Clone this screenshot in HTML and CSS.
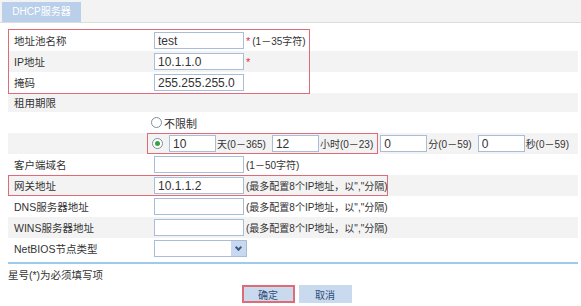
FILE: index.html
```html
<!DOCTYPE html>
<html lang="zh-CN">
<head>
  <meta charset="UTF-8">
  <title>DHCP服务器</title>
  <link rel="stylesheet" href="styles.css">
</head>
<body>
  <div class="tabbar">
    <span class="tab">DHCP服务器</span>
  </div>

  <div class="form">
    <!-- 基本信息 -->
    <div class="group">
      <div class="row">
        <div class="label">地址池名称</div>
        <div class="field"><input class="text" value="test"><span class="req">*</span><span class="hint">(1－35字符)</span></div>
      </div>
      <div class="row alt">
        <div class="label">IP地址</div>
        <div class="field"><input class="text" value="10.1.1.0"><span class="req">*</span></div>
      </div>
      <div class="row">
        <div class="label">掩码</div>
        <div class="field"><input class="text" value="255.255.255.0"></div>
      </div>
    </div>

    <!-- 租用期限 -->
    <div class="row alt short">
      <div class="label">租用期限</div>
    </div>
    <div class="row">
      <div class="label"></div>
      <div class="field lease"><span class="radio"></span>不限制</div>
    </div>
    <div class="row alt">
      <div class="label"></div>
      <div class="field lease">
        <span class="lease-mark">
          <span class="radio on"></span>
          <input class="num" value="10"><span class="unit">天(0－365)</span>
          <input class="num" value="12"><span class="unit">小时(0－23)</span>
        </span>
        <input class="num" value="0"><span class="unit">分(0－59)</span>
        <input class="num" value="0"><span class="unit">秒(0－59)</span>
      </div>
    </div>

    <div class="row">
      <div class="label">客户端域名</div>
      <div class="field"><input class="text"><span class="hint">(1－50字符)</span></div>
    </div>
    <div class="row alt gateway">
      <div class="label">网关地址</div>
      <div class="field"><input class="text" value="10.1.1.2"><span class="hint">(最多配置8个IP地址，以","分隔)</span></div>
    </div>
    <div class="row">
      <div class="label">DNS服务器地址</div>
      <div class="field"><input class="text"><span class="hint">(最多配置8个IP地址，以","分隔)</span></div>
    </div>
    <div class="row alt">
      <div class="label">WINS服务器地址</div>
      <div class="field"><input class="text"><span class="hint">(最多配置8个IP地址，以","分隔)</span></div>
    </div>
    <div class="row">
      <div class="label">NetBIOS节点类型</div>
      <div class="field">
        <span class="select"><span class="arrow"></span></span>
      </div>
    </div>
  </div>

  <div class="note">星号(*)为必须填写项</div>

  <div class="buttons">
    <button class="btn ok">确定</button>
    <button class="btn">取消</button>
  </div>
</body>
</html>
```

FILE: styles.css
```css
* {
  margin: 0;
  padding: 0;
  box-sizing: border-box;
}
body {
  background-color: #ffffff;
  font-family: "Liberation Sans", "Noto Sans CJK SC", sans-serif;
  font-size: 11px;
  color: #333333;
}
.tabbar {
  height: 23px;
  padding: 2px 0 0 2px;
  background-color: #f3f3f3;
  border-bottom: 1px solid #dcdcdc;
}
.tab {
  display: inline-block;
  width: 79px;
  height: 20px;
  line-height: 20px;
  background-color: #b9cfea;
  color: #ffffff;
  font-size: 10px;
  text-align: center;
}
.form {
  margin: 7px 3px 0 8px;
  border-bottom: 2px solid #9ccbee;
  padding-bottom: 3px;
}
.group {
  position: relative;
}
.group::after {
  content: "";
  position: absolute;
  left: 0;
  top: -1px;
  bottom: -1px;
  width: 300px;
  border: 1px solid #e06b76;
}
.row {
  display: grid;
  grid-template-columns: 139px 1fr;
  align-items: center;
  height: 21px;
}
.row.alt {
  background-color: #f3f3f3;
}
.row.short {
  height: 19px;
}
.gateway {
  position: relative;
}
.gateway::after {
  content: "";
  position: absolute;
  left: 0;
  top: 0;
  bottom: 0;
  width: 378px;
  border: 1px solid #e06b76;
}
.label {
  padding-left: 6px;
  font-size: 10.5px;
  white-space: nowrap;
}
.field {
  display: flex;
  align-items: center;
  padding-left: 7px;
  white-space: nowrap;
  height: 100%;
}
.field.lease {
  padding-left: 0;
}
input {
  font-family: "Liberation Sans", "Noto Sans CJK SC", sans-serif;
  font-size: 12px;
  color: #333333;
  border: 1px solid #a9bed6;
  background-color: #ffffff;
  height: 17px;
  padding: 0 3px;
  outline: none;
}
.text {
  width: 90px;
}
.num {
  width: 47px;
  margin-left: 2px;
}
.req {
  color: #e0303a;
  margin-left: 2px;
}
.hint {
  margin-left: 2px;
  font-size: 10px;
}
.unit {
  font-size: 10px;
  margin-left: 1px;
  padding-right: 4px;
}
.lease-mark {
  display: inline-flex;
  align-items: center;
  height: 100%;
  padding: 0 0 0 4px;
  border: 1px solid #e06b76;
}
.radio {
  display: inline-block;
  width: 11px;
  height: 11px;
  border: 1px solid #7f8fa0;
  border-radius: 50%;
  background-color: #ffffff;
  margin: 0 2px 0 4px;
  position: relative;
}
.lease-mark .radio {
  margin: 0 4px 0 0;
}
.radio.on::after {
  content: "";
  position: absolute;
  left: 2px;
  top: 2px;
  width: 5px;
  height: 5px;
  border-radius: 50%;
  background-color: #3aa14a;
}
.select {
  display: inline-flex;
  justify-content: flex-end;
  width: 93px;
  height: 17px;
  border: 1px solid #a9bed6;
  background-color: #ffffff;
}
.arrow {
  width: 15px;
  height: 15px;
  background-color: #c8d9ef;
  position: relative;
}
.arrow::after {
  content: "";
  position: absolute;
  left: 5px;
  top: 4px;
  width: 3px;
  height: 3px;
  border-right: 2px solid #3a5a8a;
  border-bottom: 2px solid #3a5a8a;
  transform: rotate(45deg);
}
.note {
  margin: 3px 0 0 8px;
  font-size: 10.5px;
}
.buttons {
  display: flex;
  justify-content: center;
  gap: 4px;
  margin: 3px 0 0 12px;
}
.btn {
  width: 53px;
  height: 18px;
  font-family: "Liberation Sans", "Noto Sans CJK SC", sans-serif;
  font-size: 10px;
  color: #2e4d7a;
  background-color: #c9daee;
  border: 1px solid #c9daee;
}
.btn.ok {
  border: 2px solid #e06b76;
}
```
